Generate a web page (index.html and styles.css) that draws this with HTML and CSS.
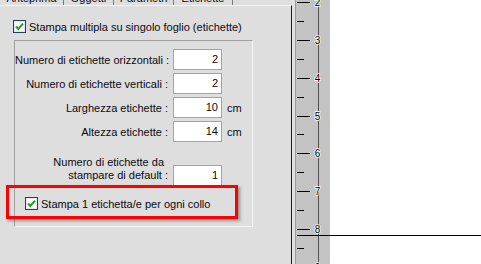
FILE: index.html
```html
<!DOCTYPE html>
<html>
<head>
<meta charset="utf-8">
<link rel="stylesheet" href="styles.css">
</head>
<body>
<div class="app">
  <div class="left">
    <div class="tabs">
      <div class="tabrow">
        <div class="tab t1">Anteprima</div>
        <div class="tab t2">Oggetti</div>
        <div class="tab t3">Parametri</div>
        <div class="tab t4 sel">Etichette</div>
        <div class="tabfill"></div>
      </div>
    </div>
    <div class="page">
      <label class="check top">
        <svg class="cb" width="13" height="13" viewBox="0 0 13 13"><rect x="0.5" y="0.5" width="12" height="12" fill="#fff" stroke="#2b3d55"/><rect x="1.5" y="1.5" width="10" height="10" fill="none" stroke="#e6e9ee"/><path d="M3 6.5 L5.3 9 L10 3.6" fill="none" stroke="#21a021" stroke-width="2"/></svg>
        <span>Stampa multipla su singolo foglio (etichette)</span>
      </label>
      <div class="group">
        <div class="grid">
          <div class="lbl">Numero di etichette orizzontali :</div>
          <div class="inp">2</div>
          <div></div>
          <div class="lbl">Numero di etichette verticali :</div>
          <div class="inp">2</div>
          <div></div>
          <div class="lbl">Larghezza etichette :</div>
          <div class="inp">10</div>
          <div class="unit">cm</div>
          <div class="lbl">Altezza etichette :</div>
          <div class="inp">14</div>
          <div class="unit">cm</div>
          <div class="lbl two"><span class="l1">Numero di etichette da</span><span>stampare di default :</span></div>
          <div class="inp end">1</div>
          <div></div>
        </div>
        <div class="hlwrap">
          <label class="check">
            <svg class="cb" width="13" height="13" viewBox="0 0 13 13"><rect x="0.5" y="0.5" width="12" height="12" fill="#fff" stroke="#2b3d55"/><rect x="1.5" y="1.5" width="10" height="10" fill="none" stroke="#e6e9ee"/><path d="M3 6.5 L5.3 9 L10 3.6" fill="none" stroke="#21a021" stroke-width="2"/></svg>
            <span>Stampa 1 etichetta/e per ogni collo</span>
          </label>
          <div class="highlight"></div>
        </div>
      </div>
    </div>
  </div>
  <div class="splitter"></div>
  <svg class="canvas" width="185" height="264" viewBox="0 0 185 264">
    <rect x="0" y="0" width="34" height="264" fill="#c3c3c3"/>
    <rect x="34" y="0" width="151" height="264" fill="#ffffff"/>
    <line x1="22.5" y1="0" x2="22.5" y2="264" stroke="#505050"/>
    <g stroke="#000" stroke-width="1">
      <line x1="1" y1="2.5" x2="14" y2="2.5"/>
      <line x1="1" y1="21.5" x2="8" y2="21.5"/>
      <line x1="1" y1="40.5" x2="14" y2="40.5"/>
      <line x1="1" y1="59.5" x2="8" y2="59.5"/>
      <line x1="1" y1="78.5" x2="14" y2="78.5"/>
      <line x1="1" y1="97.5" x2="8" y2="97.5"/>
      <line x1="1" y1="116.5" x2="14" y2="116.5"/>
      <line x1="1" y1="134.5" x2="8" y2="134.5"/>
      <line x1="1" y1="153.5" x2="14" y2="153.5"/>
      <line x1="1" y1="172.5" x2="8" y2="172.5"/>
      <line x1="1" y1="191.5" x2="14" y2="191.5"/>
      <line x1="1" y1="210.5" x2="8" y2="210.5"/>
      <line x1="1" y1="229.5" x2="14" y2="229.5"/>
      <line x1="1" y1="248.5" x2="8" y2="248.5"/>
    </g>
    <g class="digits" text-anchor="middle">
      <text x="21.5" y="6">2</text>
      <text x="21.5" y="44">3</text>
      <text x="21.5" y="82">4</text>
      <text x="21.5" y="120">5</text>
      <text x="21.5" y="157">6</text>
      <text x="21.5" y="195">7</text>
      <text x="21.5" y="233">8</text>
      <text x="21.5" y="271">9</text>
    </g>
    <line x1="1" y1="235.5" x2="185" y2="235.5" stroke="#000"/>
  </svg>
</div>
</body>
</html>
```
FILE: styles.css
```css
html, body {
  margin: 0;
  padding: 0;
}
body {
  width: 481px;
  height: 264px;
  overflow: hidden;
  background: #dedede;
  font-family: "Liberation Sans", Arial, sans-serif;
  font-size: 11px;
  color: #0a0a14;
}
.app {
  display: flex;
  height: 264px;
}
.left {
  width: 292px;
  display: flex;
  flex-direction: column;
}
.tabs {
  height: 5px;
  overflow: hidden;
}
.tabrow {
  display: flex;
  margin-top: -8px;
  height: 13px;
}
.tab {
  line-height: 13px;
  text-align: center;
  border-right: 1px solid #7a7a7a;
  box-sizing: border-box;
  white-space: nowrap;
}
.t1 { width: 64px; }
.t2 { width: 50px; }
.t3 { width: 60px; }
.t4 { width: 59px; }
.tabfill { flex: 1; }
.page {
  flex: 1;
  border-top: 1px solid #f4f4f4;
  border-right: 1px solid #1e1e1e;
  padding-top: 14px;
  position: relative;
}
.sel {
  position: relative;
}
.check {
  display: flex;
  align-items: center;
  gap: 3px;
  height: 13px;
  white-space: nowrap;
}
.check.top {
  margin-left: 13px;
}
.cb {
  display: block;
  flex: none;
}
.group {
  margin: 7px 0 0 14px;
  width: 237px;
  height: 185px;
  border: 1px solid #a0a0a0;
  border-right-color: #f6f6f6;
  border-bottom-color: #f6f6f6;
  padding-top: 8px;
  box-sizing: content-box;
}
.group {
  height: 177px;
}
.grid {
  display: grid;
  grid-template-columns: 153px 49px auto;
  column-gap: 5px;
  row-gap: 3px;
  align-items: center;
}
.lbl {
  text-align: right;
  white-space: nowrap;
}
.lbl.two {
  display: flex;
  flex-direction: column;
  align-items: flex-end;
  line-height: 13px;
  align-self: end;
  margin-top: 11px;
  margin-bottom: 4px;
}
.lbl.two .l1 {
  padding-right: 4px;
}
.inp {
  height: 21px;
  box-sizing: border-box;
  background: #fff;
  border: 1px solid #a3a3a3;
  text-align: right;
  padding-right: 3px;
  line-height: 19px;
}
.inp.end {
  align-self: end;
}
.unit {
  padding-left: 0;
}
.hlwrap {
  position: relative;
  margin: 11px 0 0 10px;
}
.highlight {
  position: absolute;
  left: -19px;
  top: -12px;
  width: 232px;
  height: 34px;
  box-sizing: border-box;
  border: 3px solid #f00;
  box-shadow: 2px 2px 3px rgba(0, 0, 0, 0.35);
}
.splitter {
  width: 4px;
  box-sizing: border-box;
  border-right: 1px solid #9c9c9c;
  background: #e2e2e2;
}
.canvas {
  display: block;
  flex: none;
}
.digits text {
  font-family: "Liberation Sans", Arial, sans-serif;
  font-size: 10px;
  fill: #000;
  stroke: #fff;
  stroke-width: 1.5px;
  paint-order: stroke;
}
```
